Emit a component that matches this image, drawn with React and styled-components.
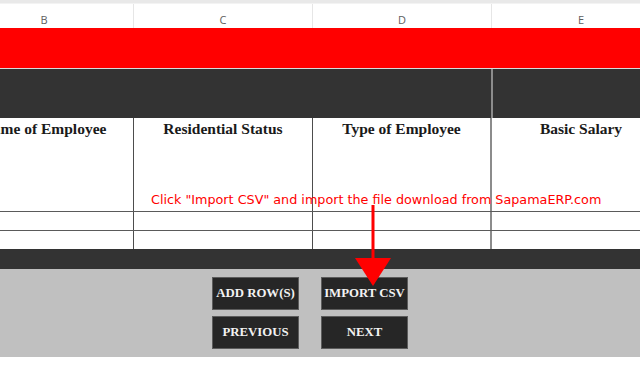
import React from "react"
import styled, { createGlobalStyle } from "styled-components"

const GlobalStyle = createGlobalStyle`
    html, body {
        margin: 0;
        padding: 0;
        background: #ffffff;
        overflow: hidden;
    }
`

const COL = 179

const Page = styled.div`
    position: relative;
    width: 640px;
    height: 367px;
    overflow: hidden;
    background: #ffffff;
`

const TopStrip = styled.div`
    height: 3px;
    background: #e9e9e9;
    border-bottom: 1px solid #f3f3f3;
`

const Track = styled.div`
    margin-left: -45px;
    width: ${COL * 4}px;
`

const LetterRow = styled.div`
    display: grid;
    grid-template-columns: repeat(4, ${COL}px);
    height: 24px;
    background: #ffffff;
`

const Letter = styled.div`
    display: flex;
    align-items: center;
    justify-content: center;
    padding-top: 7px;
    box-sizing: border-box;
    border-right: 1px solid #e6e6e6;
    font-family: "Open Sans", "DejaVu Sans", sans-serif;
    font-size: 11px;
    color: #5e5e5e;
`

const RedBand = styled.div`
    height: 40px;
    background: #ff0000;
    border-bottom: 1px solid #d9d9d9;
`

const DarkTop = styled.div`
    display: grid;
    grid-template-columns: ${COL * 3 - 1}px 2px 1fr;
    height: 49px;
    background: #333333;
`

const Divider = styled.div`
    background: #8c8c8c;
`

const HeadRow = styled.div`
    display: grid;
    grid-template-columns: repeat(4, ${COL}px);
    height: 93px;
    border-bottom: 1px solid #5a5a5a;
`

const HeadCell = styled.div`
    box-sizing: border-box;
    border-right: ${(p) => (p.$wide ? "2px solid #8c8c8c" : "1px solid #4d4d4d")};
    padding-top: 2px;
    text-align: center;
    font-family: "Liberation Serif", "DejaVu Serif", serif;
    font-weight: bold;
    font-size: 15.5px;
    color: #1a1a1a;
`

const DataRow = styled.div`
    display: grid;
    grid-template-columns: repeat(4, ${COL}px);
    height: 18px;
    border-bottom: ${(p) => (p.$last ? "none" : "1px solid #5a5a5a")};
`

const DataCell = styled.div`
    box-sizing: border-box;
    border-right: ${(p) => (p.$wide ? "2px solid #8c8c8c" : "1px solid #4d4d4d")};
`

const DarkBottom = styled.div`
    height: 20px;
    background: #333333;
`

const Footer = styled.div`
    height: 88px;
    background: #c0c0c0;
    padding: 8px 0 0 212px;
    box-sizing: border-box;
`

const ButtonGrid = styled.div`
    display: grid;
    grid-template-columns: 87px 87px;
    grid-auto-rows: 33px;
    column-gap: 22px;
    row-gap: 6px;
`

const Button = styled.button`
    margin: 0;
    padding: 0;
    background: #262626;
    border: 1px solid #5c5c5c;
    color: #f2f2f2;
    font-family: "Liberation Serif", "DejaVu Serif", serif;
    font-weight: bold;
    font-size: 12.8px;
    text-transform: uppercase;
    box-sizing: border-box;
    cursor: pointer;
`

const Note = styled.div`
    position: absolute;
    left: 151px;
    top: 192px;
    font-family: "DejaVu Sans", "Noto Sans", sans-serif;
    font-size: 12.75px;
    color: #ff0000;
    white-space: nowrap;
`

const Arrow = styled.svg`
    position: absolute;
    left: 350px;
    top: 205px;
`

const letters = ["B", "C", "D", "E"]
const headers = ["Name of Employee", "Residential Status", "Type of Employee", "Basic Salary"]

export default function App() {
    return (
        <Page>
            <GlobalStyle />
            <TopStrip />
            <Track>
                <LetterRow>
                    {letters.map((l) => (
                        <Letter key={l}>{l}</Letter>
                    ))}
                </LetterRow>
                <RedBand />
                <DarkTop>
                    <div />
                    <Divider />
                    <div />
                </DarkTop>
                <HeadRow>
                    {headers.map((h, i) => (
                        <HeadCell key={h} $wide={i === 2}>
                            {h}
                        </HeadCell>
                    ))}
                </HeadRow>
                {[0, 1].map((r) => (
                    <DataRow key={r} $last={r === 1}>
                        {letters.map((l, i) => (
                            <DataCell key={l} $wide={i === 2} />
                        ))}
                    </DataRow>
                ))}
                <DarkBottom />
            </Track>
            <Footer>
                <ButtonGrid>
                    <Button>Add Row(s)</Button>
                    <Button>Import CSV</Button>
                    <Button>Previous</Button>
                    <Button>Next</Button>
                </ButtonGrid>
            </Footer>
            <Note>Click "Import CSV" and import the file download from SapamaERP.com</Note>
            <Arrow width="46" height="86" viewBox="0 0 46 86">
                <rect x="21.5" y="0" width="3" height="57" fill="#ff0000" />
                <polygon points="5,53 41,53 23,81" fill="#ff0000" />
            </Arrow>
        </Page>
    )
}
